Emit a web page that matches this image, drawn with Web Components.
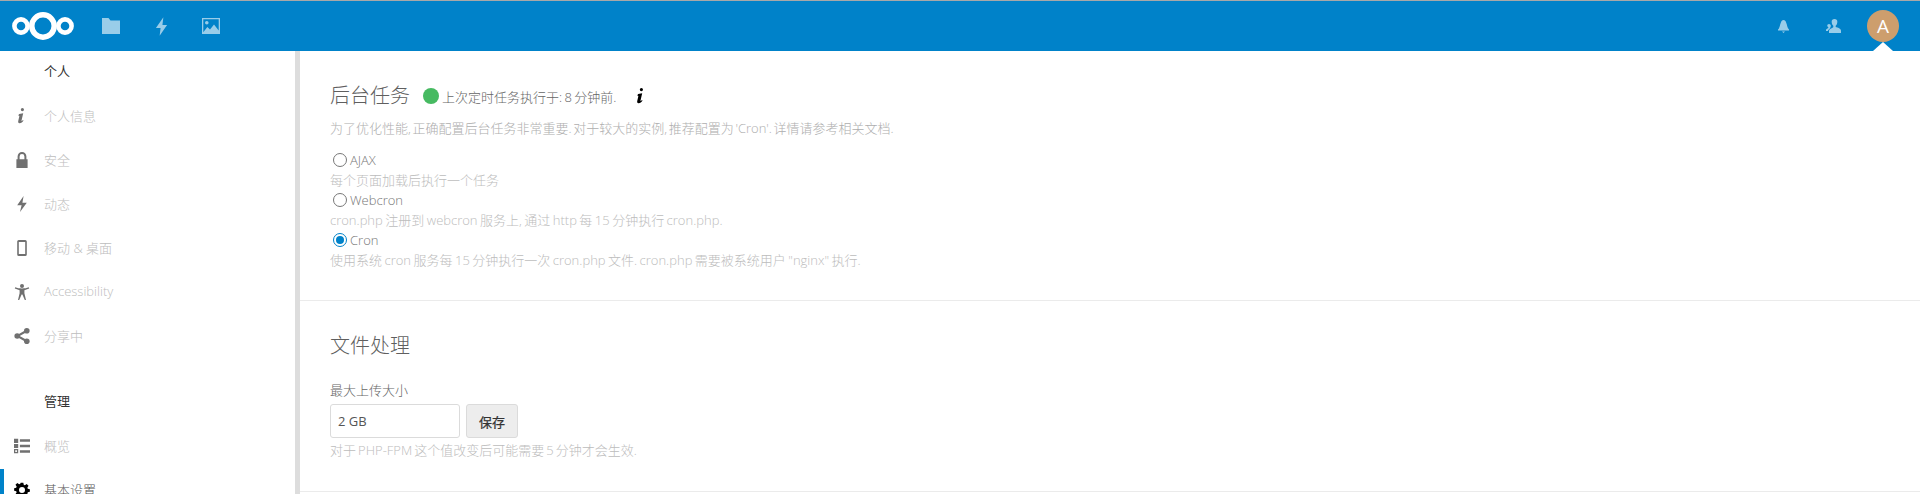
<!DOCTYPE html>
<html lang="zh"><head><meta charset="utf-8">
<style>
html,body{margin:0;padding:0;height:494px;overflow:hidden;background:#fff;font:13px "Open Sans","Noto Sans CJK SC",sans-serif;color:#555}
</style></head><body>
<nc-app></nc-app>
<script>
const icons={
 info:['4 2 16 20','<path d="M12.500 2a2 2 0 1 1 0 4 2 2 0 0 1 0-4zM8.500 9.500l5-.8-2.100 9c-.1.7.5.8 1.800-.7l.7.6c-1.500 2.300-3 3.500-5 3.400-1.500-.1-2-1.200-1.600-2.800l1.300-5.700c.2-1-.4-1.200-1.500-1.200z"/>'],
 lock:['5 2 14 20','<path fill-rule="evenodd" d="M12 2a5.500 5.500 0 0 0-5.500 5.500V11H5v11h14V11h-1.500V7.500A5.500 5.500 0 0 0 12 2zm0 2.500a3 3 0 0 1 3 3V11H9V7.500a3 3 0 0 1 3-3z"/>'],
 bolt:['4 2 16 20','<path d="M14 2 6 13.500h5.500L9.500 22 18 10.500h-5.500z"/>'],
 phone:['5 2 14 20','<path fill-rule="evenodd" d="M8 2h8a2 2 0 0 1 2 2v16a2 2 0 0 1-2 2H8a2 2 0 0 1-2-2V4a2 2 0 0 1 2-2zm0 2.500v15h8v-15z"/>'],
 access:['2 2 20 20','<circle cx="12" cy="4.500" r="2.500"/><path d="M3 7.500 3.500 6.200c3 1 5 1.500 8.500 1.500s5.500-.5 8.500-1.500L21 7.500l-6 2.200v4l2 8.300h-1.500L12.500 15h-1L8.500 22H7l2-8.300v-4z"/>'],
 share:['2 2 20 20','<circle cx="18" cy="5.500" r="3.500"/><circle cx="18" cy="18.500" r="3.500"/><circle cx="6" cy="12" r="3.500"/><path d="M6 10.600 17.300 4.300l1.400 2.400L7.400 13zM7.400 11l11.300 6.300-1.400 2.400L6 13.400z"/>'],
 list:['3 3 19 19','<path fill-rule="evenodd" d="M3 4h5v5H3zm7 .5h12v3H10zM3 10h5v5H3zm7 1h12v3H10zM3 16h5v5H3zm1.500 1.500v2h2v-2zM10 17.500h12v3H10z"/>'],
 gear:['0 0 24 24','<path fill-rule="evenodd" d="M10 1h4l.6 3.100 1.700.7 2.700-1.800 2.800 2.800-1.800 2.700.7 1.700 3.100.6v4l-3.100.6-.7 1.700 1.800 2.700-2.800 2.800-2.700-1.800-1.700.7L14 23h-4l-.6-3.100-1.700-.7L5 21l-2.800-2.800L4 15.500l-.7-1.700L.2 13.200v-4l3.100-.6.700-1.700L2.200 4.200 5 1.400l2.700 1.800 1.700-.7zM12 7.500a4.500 4.500 0 1 0 0 9 4.500 4.500 0 0 0 0-9z"/>']
};
function def(name,css,html){
 customElements.define(name,class extends HTMLElement{
  constructor(){super();this.attachShadow({mode:'open'}).innerHTML='<style>'+css+'</style>'+(typeof html==='function'?html(this):html);}
 });
}
def('nc-logo',':host{display:block;width:62px;height:30px}svg{display:block}',
 `<svg width="62" height="30" viewBox="0 0 62 30" fill="none" stroke="#fff"><circle cx="31" cy="15" r="11.200" stroke-width="5.500"/><circle cx="9" cy="15" r="6.600" stroke-width="4.600"/><circle cx="53" cy="15" r="6.600" stroke-width="4.600"/></svg>`);
def('nc-header',`:host{display:flex;align-items:center;box-sizing:border-box;height:50px;background:#0082c9;padding-left:12px;position:relative;flex:none}
 .apps{display:flex;margin-left:12px}
 .app{width:50px;height:50px;display:flex;align-items:center;justify-content:center;opacity:.6}
 .right{margin-left:auto;display:flex;align-items:center}
 .r{width:50px;height:50px;display:flex;align-items:center;justify-content:center;opacity:.6}
 .av{width:32px;height:32px;border-radius:50%;background:#cd9e6d;color:#fff;font-size:19px;line-height:32px;text-align:center;margin:0 21px 0 9px}
 .tri{position:absolute;right:27px;bottom:0;width:0;height:0;border:10px solid transparent;border-top:0;border-bottom:9px solid #fff}
 svg{display:block;fill:#fff}`,
 `<nc-logo></nc-logo><div class="apps">
 <div class="app"><svg width="18" height="16" viewBox="0 0 18 16"><path d="M0 0h6.500l2 2.500H18V16H0z"/></svg></div>
 <div class="app"><svg width="13" height="19" viewBox="0 0 14 20"><path d="M9 0 1 11.500h5L5 20l8-11.500H8z"/></svg></div>
 <div class="app"><svg width="18" height="16" viewBox="0 0 18 16"><path fill-rule="evenodd" d="M0 0h18v16H0zm1.300 1.300v13l4-5.300 2.700 2.500 4-5 4.700 6V1.300zM4.800 3a1.800 1.800 0 1 1 0 3.600 1.800 1.800 0 0 1 0-3.600z"/></svg></div>
 </div><div class="right">
 <div class="r"><svg width="11" height="13" viewBox="0 0 11 13"><path d="M5.500 0C7 0 7.500 1 8 2.200 9.300 4.500 9 8 11 9.500V10.500H0V9.500C2 8 1.700 4.500 3 2.200 3.500 1 4 0 5.500 0zM4 11.500h3L5.500 13z"/></svg></div>
 <div class="r"><svg width="15" height="14" viewBox="0 0 15 14"><path d="M8.500 0a2.800 2.800 0 0 1 2.800 3c0 1.500-.6 3-1.600 3.800v1.200c2 .5 5.300 1.300 5.300 3.800V14H3v-2c0-1 1-1.800 2-2.400.8-.5 2.200-1 2.300-1.600V6.800C6.300 6 5.700 4.500 5.700 3A2.800 2.800 0 0 1 8.500 0zM3 5a1.800 1.800 0 0 1 1.800 2c0 1-.3 1.800-1 2.300v.4C2.800 10.400 2 11 2 12H0v-1c0-1.300 2-1.600 2.300-2v-.7C1.600 7.800 1.200 7 1.200 6.800A1.800 1.800 0 0 1 3 5z"/></svg></div>
 <div class="av">A</div></div><div class="tri"></div>`);
def('nc-nav-head',`:host{display:block;height:44px;line-height:44px;padding-left:44px;color:#333}`,'<slot></slot>');
def('nc-nav-item',`:host{display:flex;align-items:center;height:44px;padding-left:44px;position:relative;color:#bdbdbd;font-weight:300}
 :host([active]){color:#555}
 :host([active]) .bar{position:absolute;left:0;top:2px;bottom:0;width:4px;background:#0082c9}
 svg{position:absolute;left:14px;top:15px;width:16px;height:16px;fill:#707070}
 :host([active]) svg{fill:#000}`,
 el=>{const i=icons[el.getAttribute('icon')];return `<span class="bar"></span><svg viewBox="${i[0]}">${i[1]}</svg><slot></slot>`});
def('nc-sidebar',`:host{display:block;box-sizing:border-box;width:300px;flex:none;border-right:5px solid #ddd;overflow:hidden}
 nc-nav-head:first-of-type{margin-top:-2px}
 .gap{height:22px}`,
 `<nc-nav-head>个人</nc-nav-head>
 <nc-nav-item icon="info">个人信息</nc-nav-item>
 <nc-nav-item icon="lock">安全</nc-nav-item>
 <nc-nav-item icon="bolt">动态</nc-nav-item>
 <nc-nav-item icon="phone">移动 &amp; 桌面</nc-nav-item>
 <nc-nav-item icon="access">Accessibility</nc-nav-item>
 <nc-nav-item icon="share">分享中</nc-nav-item>
 <div class="gap"></div>
 <nc-nav-head>管理</nc-nav-head>
 <nc-nav-item icon="list">概览</nc-nav-item>
 <nc-nav-item icon="gear" active>基本设置</nc-nav-item>`);
def('nc-radio',`:host{display:flex;align-items:center;height:20px;color:#777;padding-left:3px;font-weight:300}
 .c{box-sizing:border-box;width:14px;height:14px;border-radius:50%;border:1px solid #777;margin-right:3px;flex:none;background:#fff}
 :host([checked]) .c{border:1px solid #0082c9;padding:2px;background:#0082c9 content-box}`,
 '<span class="c"></span><slot></slot>');
def('nc-cron-status',`:host{display:flex;align-items:center;height:30px}
 h2{margin:0;font-size:20px;font-weight:300;color:#5f5f5f;line-height:30px}
 .dot{width:16px;height:16px;border-radius:50%;background:#46ba61;margin:0 3px 0 13px}
 .t{word-spacing:-1px;font-weight:300;color:#666}
 .i{margin-left:17px;width:16px;height:16px;fill:#000}`,
 `<h2>后台任务</h2><span class="dot"></span><span class="t">上次定时任务执行于: 8 分钟前.</span><svg class="i" viewBox="${icons.info[0]}">${icons.info[1]}</svg>`);
def('nc-hint',`:host{display:block;color:#bcbcbc;line-height:20px;font-weight:300;word-spacing:var(--ws,-.9px)}`,'<slot></slot>');
def('nc-btn',`:host{display:inline-flex;align-items:center;justify-content:center;box-sizing:border-box;width:52px;height:34px;background:#ededed;border:1px solid #dbdbdb;border-radius:3px;color:#333;-webkit-text-stroke:.25px #333}`,'<slot></slot>');
def('nc-input',`:host{display:flex;align-items:center;box-sizing:border-box;width:130px;height:34px;background:#fff;border:1px solid #dbdbdb;border-radius:3px;padding-left:7px;color:#555}`,'<slot></slot>');
def('nc-files',`:host{display:block;padding:30px 30px 0;box-sizing:border-box;height:191px;border-bottom:1px solid #ebebeb}
 h2{margin:0;font-size:20px;font-weight:300;color:#5f5f5f;line-height:30px}
 .lab{margin-top:19px;height:20px;line-height:20px;color:#666;font-weight:300}
 .row{display:flex;gap:6px;margin-top:4px}
 nc-hint{margin-top:2px;--ws:-1.300px}`,
 `<h2>文件处理</h2><div class="lab">最大上传大小</div><div class="row"><nc-input>2 GB</nc-input><nc-btn>保存</nc-btn></div><nc-hint>对于 PHP-FPM 这个值改变后可能需要 5 分钟才会生效.</nc-hint>`);
def('nc-cron',`:host{display:block;box-sizing:border-box;height:250px;padding:30px 30px 0;border-bottom:1px solid #ebebeb}
 .desc{margin:7px 0 12px;--ws:-1.700px;color:#aeaeae}`,
 `<nc-cron-status></nc-cron-status>
 <nc-hint class="desc">为了优化性能, 正确配置后台任务非常重要. 对于较大的实例, 推荐配置为 'Cron'. 详情请参考相关文档.</nc-hint>
 <nc-radio>AJAX</nc-radio><nc-hint>每个页面加载后执行一个任务</nc-hint>
 <nc-radio>Webcron</nc-radio><nc-hint>cron.php 注册到 webcron 服务上, 通过 http 每 15 分钟执行 cron.php.</nc-hint>
 <nc-radio checked>Cron</nc-radio><nc-hint>使用系统 cron 服务每 15 分钟执行一次 cron.php 文件. cron.php 需要被系统用户 "nginx" 执行.</nc-hint>`);
def('nc-app',`:host{display:flex;flex-direction:column;height:494px;border-top:1px solid #a8a8a8;box-sizing:border-box;overflow:hidden}
 .body{display:flex;flex:1;min-height:0}
 main{flex:1;min-width:0}`,
 `<nc-header></nc-header><div class="body"><nc-sidebar></nc-sidebar><main><nc-cron></nc-cron><nc-files></nc-files></main></div>`);
</script>
</body></html>
